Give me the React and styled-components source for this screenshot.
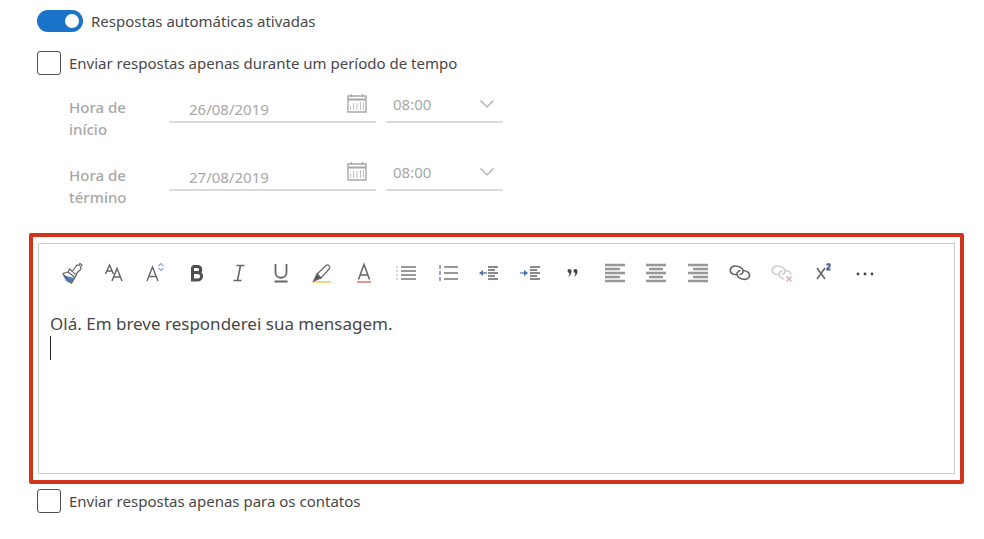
import React, { useState } from 'react';
import styled, { createGlobalStyle } from 'styled-components';

const GlobalStyle = createGlobalStyle`
    * {
        box-sizing: border-box;
    }
    body {
        margin: 0;
        background: #fff;
        color: #484848;
        font-family: 'Noto Sans', 'Open Sans', sans-serif;
        font-size: 15px;
    }
    input, select, textarea, button {
        font: inherit;
        color: inherit;
    }
`;

const Page = styled.main`
    display: flex;
    flex-direction: column;
    padding: 9px 20px 20px 29px;
`;

const Options = styled.div`
    display: flex;
    flex-direction: column;
    gap: 18px;
    margin-left: 8px;
`;

const Option = styled.label`
    display: flex;
    align-items: center;
    gap: 8px;
    height: 24px;
    line-height: 24px;
`;

const Switch = styled.input`
    appearance: none;
    display: flex;
    align-items: center;
    justify-content: flex-end;
    width: 46px;
    height: 22px;
    margin: 0;
    padding: 0 4px;
    border-radius: 11px;
    background: #1a73c8;
    cursor: pointer;
    &::before {
        content: '';
        width: 14px;
        height: 14px;
        border-radius: 50%;
        background: #fff;
    }
    &:not(:checked) {
        justify-content: flex-start;
        background: #999;
    }
`;

const Checkbox = styled.input`
    appearance: none;
    display: grid;
    place-items: center;
    width: 24px;
    height: 24px;
    margin: 0;
    border: 1px solid #505050;
    border-radius: 3px;
    cursor: pointer;
    &:checked::before {
        content: '✓';
    }
`;

const Schedule = styled.div`
    display: flex;
    flex-direction: column;
    gap: 14px;
    margin: 11px 0 25px 40px;
    color: #a8a8a8;
`;

const ScheduleRow = styled.div`
    display: flex;
    align-items: flex-start;
    min-height: 54px;
`;

const ScheduleLabel = styled.label`
    width: 100px;
    padding: 10px 38px 0 0;
    font-weight: 500;
    line-height: 22px;
`;

const Field = styled.div`
    display: flex;
    align-items: center;
    width: ${({ $width }) => $width}px;
    height: 37px;
    margin-right: 10px;
    padding-right: 8px;
    border-bottom: 2px solid #dcdcdc;
    svg {
        flex: none;
    }
`;

const DateInput = styled.input`
    flex: 1;
    min-width: 0;
    height: 35px;
    padding: 11px 0 0 20px;
    border: 0;
    background: none;
    &:disabled {
        color: #a8a8a8;
    }
`;

const TimeSelect = styled.select`
    appearance: none;
    flex: 1;
    min-width: 0;
    height: 35px;
    padding: 0 0 0 7px;
    border: 0;
    background: none;
    &:disabled {
        color: #a8a8a8;
        opacity: 1;
    }
`;

const Highlight = styled.section`
    margin-bottom: 5px;
    padding: 6px 5px;
    border: 4px solid #d2341a;
    border-radius: 2px;
`;

const Editor = styled.div`
    border: 1px solid #ccc;
`;

const Toolbar = styled.div`
    display: grid;
    grid-template-columns: repeat(20, 1fr);
    padding: 15px 68px 13px 12px;
`;

const ToolButton = styled.button`
    display: flex;
    align-items: center;
    justify-content: center;
    height: 28px;
    padding: 0;
    border: 0;
    background: none;
    cursor: pointer;
`;

const MessageArea = styled.div`
    position: relative;
`;

const Message = styled.textarea`
    display: block;
    width: 100%;
    height: 173px;
    padding: 12px 11px;
    border: 0;
    outline: 0;
    resize: none;
    background: none;
    font-size: 17px;
    line-height: 24px;
`;

const Caret = styled.span`
    position: absolute;
    top: 36px;
    left: 11px;
    width: 1px;
    height: 24px;
    background: #222;
`;

const Svg = ({ size = 22, children }) => (
    <svg
        width={size}
        height={size}
        viewBox={`0 0 ${size} ${size}`}
        fill='none'
        stroke='#666'
        strokeWidth='1.2'
        aria-hidden='true'>
        {children}
    </svg>
);

const CalendarIcon = () => (
    <Svg>
        <g stroke='#a8a8a8'>
            <path d='M2 3h18v16H2zM5.500 1v3M16.500 1v3' strokeWidth='1.4' />
            <path d='M2 6.500h18' strokeWidth='2' />
            <path d='M7.500 10v7M11 10v7M14.500 9v8M17.500 9v8M4.500 13v4' strokeWidth='1' stroke='#c4c4c4' />
        </g>
    </Svg>
);

const ChevronIcon = () => (
    <Svg size={16}>
        <path d='M1.500 4.500 8 11l6.500-6.500' stroke='#a8a8a8' />
    </Svg>
);

const lines = (rows) => rows.map(([x1, x2], i) => `M${x1} ${3 + i * 4}H${x2}`).join('');

const tools = [
    {
        label: 'Pincel de formatação',
        icon: (
            <>
                <path d='m3 14 10 2.500-2.500 4.500-5-2.500z' fill='#4f80c4' stroke='#4f80c4' />
                <path d='m1.500 11.500 5.500-1.500 1.500-3 7 6-1.500 2.500-3.500 5.500L2 12M7 10l7 5.500' />
                <path d='m11.500 9 4.500-6 2 .500 1-2 2 1.500-1.500 2 .500 2-5 5' fill='#fff' />
            </>
        ),
    },
    {
        label: 'Fonte',
        icon: (
            <path
                d='m2.500 12 4-9 4 9M4 9h5M9 19l5-12.500L19 19M10.500 15h7'
                strokeWidth='1.500'
            />
        ),
    },
    {
        label: 'Tamanho da fonte',
        icon: (
            <>
                <path d='M3 19 8.500 5 14 19M5 14.500h7' strokeWidth='1.400' />
                <path d='m14.500 4 2.500-2.500L19.500 4M14.500 6l2.500 2.500L19.500 6' stroke='#8aa6d2' />
            </>
        ),
    },
    {
        label: 'Negrito',
        icon: (
            <path
                d='M6.500 4.500h4.500c5 0 5 6 0 6H6.500M11 10.500c6.500 0 6 7.500 0 7.500H6.500V4.500'
                stroke='#505050'
                strokeWidth='3'
            />
        ),
    },
    { label: 'Itálico', icon: <path d='M8.500 3.500h8M5.500 18.500h8M12.500 3.500l-3 15' strokeWidth='1.600' /> },
    {
        label: 'Sublinhado',
        icon: <path d='M5.500 2v8.500c0 7 11 7 11 0V2M4.500 19.500h13' strokeWidth='1.800' />,
    },
    {
        label: 'Realce',
        icon: (
            <>
                <path d='M2 20h18' stroke='#f2cb58' strokeWidth='1.600' />
                <path d='m6 12 9-8.500c2-1.500 5 1 3.500 3L10 16z' />
                <path d='m6 12-3.500 7 7.500-3z' fill='#555' />
            </>
        ),
    },
    {
        label: 'Cor da fonte',
        icon: (
            <>
                <path d='m5.500 17.500 5.500-15 5.500 15M7.500 13h7' strokeWidth='1.500' />
                <path d='M4 20h14' stroke='#d76a61' strokeWidth='1.400' />
            </>
        ),
    },
    {
        label: 'Marcadores',
        icon: (
            <>
                <path d='M6 5h15M6 9h15M6 13h15M6 17h15' stroke='#9a9a9a' strokeWidth='2.200' />
                <path d='M2 4v14' strokeDasharray='2 2' stroke='#bbb' />
            </>
        ),
    },
    {
        label: 'Numeração',
        icon: (
            <>
                <path d='M7 5h14M7 11h14M7 17h14' stroke='#999' strokeWidth='1.800' />
                <path d='M3 3v4M3 9v4M3 15v4' stroke='#8492a8' strokeWidth='1.600' />
            </>
        ),
    },
    {
        label: 'Diminuir recuo',
        icon: (
            <>
                <path d='M10 5h10M10 8h7M10 11h10M10 14h7M10 17h10' stroke='#8a8a8a' strokeWidth='2' />
                <path d='M9 11H5' stroke='#6d87ad' strokeWidth='1.600' />
                <path d='M5 8v6l-4-3z' fill='#56759f' stroke='none' />
            </>
        ),
    },
    {
        label: 'Aumentar recuo',
        icon: (
            <>
                <path d='M10 5h10M10 8h7M10 11h10M10 14h7M10 17h10' stroke='#8a8a8a' strokeWidth='2' />
                <path d='M0 11h5' stroke='#6d9ad0' strokeWidth='1.600' />
                <path d='M4 8v6l4-3z' fill='#3f6da8' stroke='none' />
            </>
        ),
    },
    {
        label: 'Citação',
        icon: (
            <g fill='#444' stroke='none'>
                <path d='M5.500 9a2 2 0 0 1 4 0c0 3-1.500 5-3.500 6 1-1.500 1.500-2.500 1.200-4a2 2 0 0 1-1.700-2z' />
                <path d='M11.500 9a2 2 0 0 1 4 0c0 3-1.500 5-3.500 6 1-1.500 1.500-2.500 1.200-4a2 2 0 0 1-1.700-2z' />
            </g>
        ),
    },
    {
        label: 'Alinhar à esquerda',
        icon: <path d={lines([[1, 21], [1, 16], [1, 21], [1, 16], [1, 21]])} stroke='#989898' strokeWidth='2.400' />,
    },
    {
        label: 'Centralizar',
        icon: <path d={lines([[1, 21], [4, 18], [1, 21], [4, 18], [1, 21]])} stroke='#989898' strokeWidth='2.400' />,
    },
    {
        label: 'Alinhar à direita',
        icon: <path d={lines([[1, 21], [6, 21], [1, 21], [6, 21], [1, 21]])} stroke='#989898' strokeWidth='2.400' />,
    },
    {
        label: 'Inserir link',
        icon: (
            <path
                d='M7.500 12.500C3 13 .500 10 1.500 7c1-3 4.500-3.500 8-2.500 4 1 5.500 4 4 6.500-.500 1-1.500 1.500-3 1.500M14 8.500c4 0 7 2.500 6.500 5.500-.500 3-4 4-7.500 3-4-1-6-4-4.500-6.500.500-1 1.500-1.700 3-2'
                strokeWidth='1.600'
            />
        ),
    },
    {
        label: 'Remover link',
        icon: (
            <g stroke='#d0cccc'>
                <path
                    d='M7.500 12.500C3 13 .500 10 1.500 7c1-3 4.500-3.500 8-2.500 4 1 5.500 4 4 6.500-.500 1-1.500 1.500-3 1.500M14 8.500c3 0 5.500 1.500 6 4M13 17c-4-1-6-4-4.500-6.500.500-1 1.500-1.700 3-2'
                    strokeWidth='1.600'
                />
                <path d='m15.500 14.500 5 5m0-5-5 5' stroke='#d3b5b5' strokeWidth='1.600' />
            </g>
        ),
    },
    {
        label: 'Sobrescrito',
        icon: (
            <>
                <path d='m5 6 8 11M13 6 5 17' strokeWidth='1.600' />
                <path d='M15 3.500c0-2 3-2 3 0 0 1.500-3 2-3 4h3.500' stroke='#4a64a8' strokeWidth='1.800' />
            </>
        ),
    },
    {
        label: 'Mais opções',
        icon: (
            <g fill='#444' stroke='none'>
                <circle cx='4' cy='12' r='1.400' />
                <circle cx='11' cy='12' r='1.400' />
                <circle cx='18' cy='12' r='1.400' />
            </g>
        ),
    },
];

const ScheduleFields = ({ id, label, date, disabled }) => (
    <ScheduleRow>
        <ScheduleLabel htmlFor={id}>{label}</ScheduleLabel>
        <Field $width={207}>
            <DateInput id={id} defaultValue={date} disabled={disabled} />
            <CalendarIcon />
        </Field>
        <Field $width={117}>
            <TimeSelect aria-label={`${label}, horário`} defaultValue='08:00' disabled={disabled}>
                <option>08:00</option>
                <option>08:30</option>
                <option>09:00</option>
            </TimeSelect>
            <ChevronIcon />
        </Field>
    </ScheduleRow>
);

function App() {
    const [scheduled, setScheduled] = useState(false);

    return (
        <Page>
            <GlobalStyle />
            <Options>
                <Option>
                    <Switch type='checkbox' role='switch' defaultChecked />
                    Respostas automáticas ativadas
                </Option>
                <Option>
                    <Checkbox
                        type='checkbox'
                        checked={scheduled}
                        onChange={(e) => setScheduled(e.target.checked)}
                    />
                    Enviar respostas apenas durante um período de tempo
                </Option>
            </Options>
            <Schedule>
                <ScheduleFields id='start' label='Hora de início' date='26/08/2019' disabled={!scheduled} />
                <ScheduleFields id='end' label='Hora de término' date='27/08/2019' disabled={!scheduled} />
            </Schedule>
            <Highlight>
                <Editor>
                    <Toolbar role='toolbar' aria-label='Formatação'>
                        {tools.map(({ label, icon }) => (
                            <ToolButton key={label} type='button' aria-label={label}>
                                <Svg>{icon}</Svg>
                            </ToolButton>
                        ))}
                    </Toolbar>
                    <MessageArea>
                        <Message
                            aria-label='Mensagem'
                            spellCheck={false}
                            defaultValue={'Olá. Em breve responderei sua mensagem.\n'}
                        />
                        <Caret />
                    </MessageArea>
                </Editor>
            </Highlight>
            <Options>
                <Option>
                    <Checkbox type='checkbox' />
                    Enviar respostas apenas para os contatos
                </Option>
            </Options>
        </Page>
    );
}

export default App;
